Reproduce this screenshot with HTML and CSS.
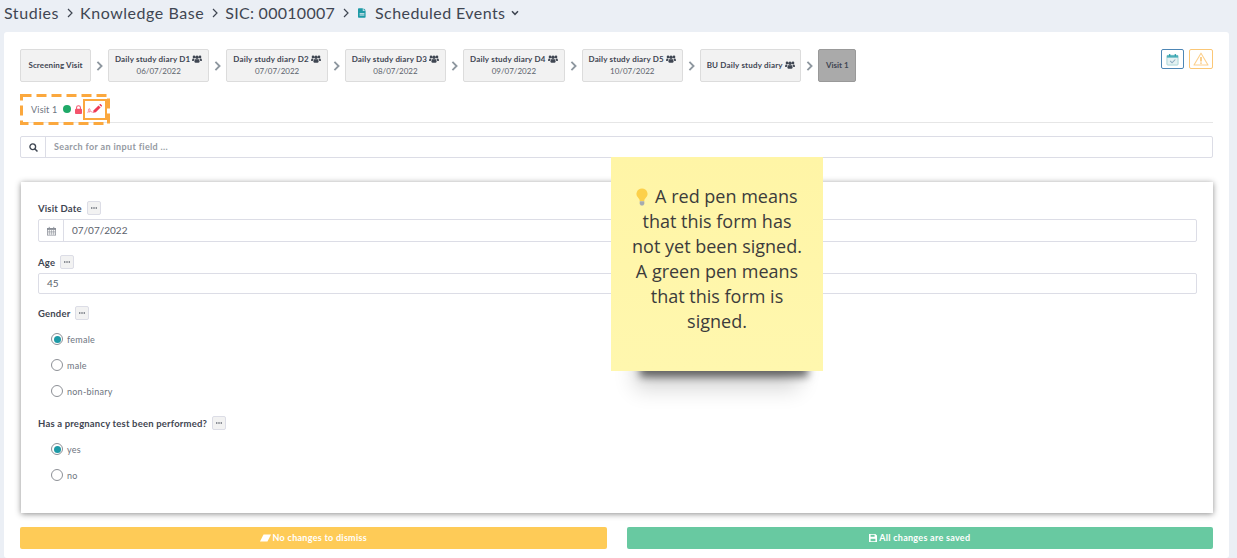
FILE: index.html
```html
<!DOCTYPE html>
<html lang="en">
<head>
<meta charset="utf-8">
<title>Scheduled Events</title>
<link rel="stylesheet" href="styles.css">
</head>
<body>
<svg class="defs" width="0" height="0" aria-hidden="true">
  <symbol id="users" viewBox="0 0 16 12">
    <circle cx="3.200" cy="2.600" r="2.100"/><circle cx="12.800" cy="2.600" r="2.100"/><circle cx="8" cy="3" r="2.800"/>
    <path d="M0 8.500C0 6 1 5 2.200 5c.9 0 1.500.4 2 .9-.9.7-1.300 1.900-1.400 3.400H.8C.3 9.300 0 8.900 0 8.500zM16 8.500C16 6 15 5 13.800 5c-.9 0-1.500.4-2 .9.9.7 1.300 1.900 1.400 3.400h2c.5 0 .8-.4.8-.8zM3.800 10c0-2.900 1.200-4.200 2.600-4.200.5.300 1 .5 1.600.5s1.100-.2 1.600-.5c1.400 0 2.600 1.300 2.600 4.200 0 1-.7 1.800-1.500 1.800H5.300c-.8 0-1.500-.8-1.500-1.800z"/>
  </symbol>
  <symbol id="chev" viewBox="0 0 8 12">
    <path d="M1.500 1 6.500 6l-5 5" fill="none" stroke="currentColor" stroke-width="2.200"/>
  </symbol>
  <symbol id="dots" viewBox="0 0 8 2">
    <circle cx="1" cy="1" r="1"/><circle cx="4" cy="1" r="1"/><circle cx="7" cy="1" r="1"/>
  </symbol>
</svg>

<header class="crumbs">
  <span>Studies</span><svg class="sep" viewBox="0 0 6 10"><path d="M1 1l4 4-4 4" fill="none" stroke="currentColor" stroke-width="1.200"/></svg>
  <span>Knowledge Base</span><svg class="sep" viewBox="0 0 6 10"><path d="M1 1l4 4-4 4" fill="none" stroke="currentColor" stroke-width="1.200"/></svg>
  <span class="sic">SIC: 00010007</span><svg class="sep" viewBox="0 0 6 10"><path d="M1 1l4 4-4 4" fill="none" stroke="currentColor" stroke-width="1.200"/></svg>
  <svg class="doc-icon" viewBox="0 0 10 12"><path d="M1 0h5v3.500h3.500V11a1 1 0 0 1-1 1H1a1 1 0 0 1-1-1V1a1 1 0 0 1 1-1zM7 0l3 3H7zM2 6h6v1H2zM2 8h6v1H2z" fill-rule="evenodd"/></svg>
  <span class="current">Scheduled Events</span>
  <svg class="caret" viewBox="0 0 8 6"><path d="M1 1.200 4 4.300l3-3.100" fill="none" stroke="currentColor" stroke-width="1.500"/></svg>
</header>

<main class="card">
  <div class="timeline-row">
    <nav class="timeline">
      <div class="node node-s">Screening Visit</div>
      <svg class="chev"><use href="#chev"/></svg>
      <div class="node"><b>Daily study diary D1 <svg class="users"><use href="#users"/></svg></b><span>06/07/2022</span></div>
      <svg class="chev"><use href="#chev"/></svg>
      <div class="node"><b>Daily study diary D2 <svg class="users"><use href="#users"/></svg></b><span>07/07/2022</span></div>
      <svg class="chev"><use href="#chev"/></svg>
      <div class="node"><b>Daily study diary D3 <svg class="users"><use href="#users"/></svg></b><span>08/07/2022</span></div>
      <svg class="chev"><use href="#chev"/></svg>
      <div class="node"><b>Daily study diary D4 <svg class="users"><use href="#users"/></svg></b><span>09/07/2022</span></div>
      <svg class="chev"><use href="#chev"/></svg>
      <div class="node"><b>Daily study diary D5 <svg class="users"><use href="#users"/></svg></b><span>10/07/2022</span></div>
      <svg class="chev"><use href="#chev"/></svg>
      <div class="node"><b>BU Daily study diary <svg class="users"><use href="#users"/></svg></b></div>
      <svg class="chev"><use href="#chev"/></svg>
      <div class="node node-active">Visit 1</div>
    </nav>
    <div class="status-btns">
      <span class="sbtn sbtn-blue">
        <svg viewBox="0 0 14 14" width="13" height="13"><rect x="1" y="2.500" width="12" height="10.500" rx="1" fill="#e4f1f2" stroke="#a5d3d6"/><rect x="1" y="2.500" width="12" height="2.500" fill="#4fb0ba"/><path d="M4 1v2.500M10 1v2.500" stroke="#1e9aa6" stroke-width="1.200"/><path d="m4.500 8.500 2 2 3.500-3.500" fill="none" stroke="#8aa9bf" stroke-width="1.100"/></svg>
      </span>
      <span class="sbtn sbtn-yellow">
        <svg viewBox="0 0 16 14" width="16" height="14"><path d="M8 1.200 15 13H1z" fill="none" stroke="#fcd08d" stroke-width="1.100" stroke-linejoin="round"/><path d="M8 5v4.500M8 10.500v1.200" stroke="#f9b44f" stroke-width="1.300"/></svg>
      </span>
    </div>
  </div>

  <div class="tabs">
    <div class="tab">
      <span class="tab-label">Visit 1</span>
      <i class="dot"></i>
      <svg class="lock" viewBox="0 0 8 10"><path d="M1.800 4.500V2.800a2.200 2.200 0 0 1 4.400 0v1.700" fill="none" stroke="#f4546c" stroke-width="1.200"/><rect y="4" width="8" height="6" rx="1" fill="#f4546c"/></svg>
      <svg class="sign" viewBox="0 0 15 10"><path d="M.5 8.500c1.500 0 .5-4 1.700-4s.9 3.200 0 3.700c-.9.400.9-1.300 1.800-.9s.4 1.300 1.700.9" fill="none" stroke="#f58a9a" stroke-width="1"/><path d="M6 8.800l.7-2.600L11.500 1.400l2.100 2.100-4.800 4.800z" fill="#ee3a55"/><path d="M12.200.7l.6-.5a.7.7 0 0 1 1 0l1 1a.7.7 0 0 1 0 1l-.5.6z" fill="#ee3a55"/></svg>
    </div>
    <svg class="tab-dash" viewBox="0 0 90 31" aria-hidden="true"><rect x="1.500" y="1.500" width="87" height="28" fill="none" stroke="#fba83e" stroke-width="3" stroke-dasharray="10 5"/></svg>
    <i class="pen-box" aria-hidden="true"></i>
  </div>

  <div class="input-group search">
    <span class="addon"><svg viewBox="0 0 12 12" width="9" height="9"><circle cx="5" cy="5" r="3.800" fill="none" stroke="#3f4652" stroke-width="1.800"/><path d="m8 8 3.300 3.300" stroke="#3f4652" stroke-width="2"/></svg></span>
    <span class="field placeholder">Search for an input field ...</span>
  </div>

  <form class="form-card">
    <div class="fgroup fgroup-date">
      <div class="label-row"><label>Visit Date</label><span class="more"><svg><use href="#dots"/></svg></span></div>
      <div class="input-group tall">
        <span class="addon"><svg viewBox="0 0 12 12" width="9" height="10"><path d="M0 2h12v10H0z" fill="#8a8f98"/><path d="M1 4.500h10V11H1z" fill="#fff"/><path d="M1 6.500h10M1 8.500h10M3.300 4.500V11M6 4.500V11M8.700 4.500V11" stroke="#8a8f98" stroke-width=".7"/><path d="M3 .5v2M9 .5v2" stroke="#8a8f98" stroke-width="1.200"/></svg></span>
        <span class="field value">07/07/2022</span>
      </div>
    </div>
    <div class="fgroup fgroup-age">
      <div class="label-row"><label>Age</label><span class="more"><svg><use href="#dots"/></svg></span></div>
      <div class="input-group"><span class="field value">45</span></div>
    </div>
    <div class="fgroup fgroup-gender">
      <div class="label-row"><label>Gender</label><span class="more"><svg><use href="#dots"/></svg></span></div>
      <div class="radios">
        <div class="radio on"><i></i>female</div>
        <div class="radio"><i></i>male</div>
        <div class="radio"><i></i>non-binary</div>
      </div>
    </div>
    <div class="fgroup fgroup-preg">
      <div class="label-row"><label>Has a pregnancy test been performed?</label><span class="more"><svg><use href="#dots"/></svg></span></div>
      <div class="radios">
        <div class="radio on"><i></i>yes</div>
        <div class="radio"><i></i>no</div>
      </div>
    </div>
  </form>

  <div class="actions">
    <div class="action action-yellow">
      <svg viewBox="0 0 14 10" width="11" height="8"><path d="M4.500.5H14L9.500 9.500H0z" fill="#fff"/></svg>
      No changes to dismiss
    </div>
    <div class="action action-green">
      <svg viewBox="0 0 10 10" width="8" height="8"><path d="M0 0h8l2 2v8H0z" fill="#fff"/><path d="M2 1h5v2.500H2z" fill="#68c9a1"/><path d="M2 6h6v3H2z" fill="#68c9a1"/></svg>
      All changes are saved
    </div>
  </div>

  <aside class="sticky">
    <svg class="bulb" viewBox="0 0 12 18"><path d="M6 .5a5.500 5.500 0 0 0-3.300 9.900c.8.700 1 1.500 1 2.600h4.600c0-1.100.2-1.900 1-2.600A5.500 5.500 0 0 0 6 .5z" fill="#fcd04a"/><path d="M3.700 13.200h4.600v2.800l-1.200 1.500H4.900L3.700 16z" fill="#a6abb0"/></svg>
    A red pen means that this form has not yet been signed. A green pen means that this form is signed.
  </aside>
</main>
</body>
</html>
```

FILE: styles.css
```css
* { box-sizing: border-box; }
html, body { margin: 0; height: 558px; overflow: hidden; }
body {
  background: #ebeff5;
  font-family: "Lato", "Noto Sans", sans-serif;
  color: #3f4652;
}
.defs { position: absolute; }

.crumbs {
  height: 32px;
  padding: 0 0 7px 4px;
  display: flex;
  align-items: center;
  font-size: 16px;
  letter-spacing: .55px;
  color: #3f4652;
}
.sep { width: 6px; height: 10px; margin: 0 7px 0 8px; flex: none; }
.sic { letter-spacing: .28px; }
.current { letter-spacing: .42px; }
.doc-icon { width: 8px; height: 10px; fill: #1e9aa6; margin: 0 9px 0 2px; }
.caret { width: 8px; height: 6px; margin-left: 6px; }

.card {
  position: relative;
  margin: 0 8px 0 4px;
  height: 526px;
  background: #fff;
  border-radius: 3px;
  padding: 17px 16px 0;
}

.timeline-row { display: flex; justify-content: space-between; align-items: flex-start; height: 33px; }
.timeline { display: flex; align-items: center; }
.chev { width: 7px; height: 10px; margin: 0 5px; color: #8e979f; flex: none; }
.node {
  height: 33px;
  width: 101.4px;
  padding-bottom: 2px;
  background: #f2f2f2;
  border: 1px solid #dcdcdc;
  border-radius: 2px;
  display: flex;
  flex-direction: column;
  align-items: center;
  justify-content: center;
  font-size: 8px;
  line-height: 12px;
  white-space: nowrap;
}
.node b { font-weight: 700; letter-spacing: .18px; }
.node span { color: #5c626c; }
.node-s { width: 71px; font-weight: 700; letter-spacing: .1px; }
.node-active { width: 38px; background: #aaa; border-color: #999; font-weight: 700; }
.users { width: 10px; height: 8px; fill: #3f4652; vertical-align: -1px; }

.status-btns { display: flex; gap: 5px; }
.sbtn { width: 23px; height: 20px; border-radius: 2px; display: flex; align-items: center; justify-content: center; background: #fff; }
.sbtn-blue { border: 1px solid #4d86b5; }
.sbtn-yellow { width: 24px; border: 1px solid #fbc776; }

.tabs {
  position: relative;
  margin-top: 14px;
  height: 27px;
  border-bottom: 1px solid #e6e6e6;
}
.tab { height: 26px; display: flex; align-items: center; padding-left: 11px; font-size: 9px; }
.tab-label { color: #6d7480; letter-spacing: .2px; margin-right: 6px; }
.dot { width: 8px; height: 8px; border-radius: 50%; background: #1fa968; margin-right: 4px; }
.lock { width: 7px; height: 9px; margin-right: 5px; }
.sign { width: 15px; height: 10px; }
.tab-dash {
  position: absolute;
  left: 0; top: -2px;
  width: 90px; height: 31px;
}
.pen-box {
  position: absolute;
  left: 63px; top: 3px;
  width: 24px; height: 21px;
  border: 2.500px solid #fba83e;
}

.input-group {
  display: flex;
  height: 21px;
  border: 1px solid #dcdde6;
  border-radius: 2px;
  background: #fff;
  align-items: stretch;
}
.input-group.tall { height: 23px; }
.addon { width: 25px; flex: none; display: flex; align-items: center; justify-content: center; border-right: 1px solid #dcdde6; }
.field { flex: 1; display: flex; align-items: center; padding: 0 0 1px 8px; }
.search { margin-top: 13px; height: 22px; }
.placeholder { font-size: 9px; font-weight: 700; color: #959aa2; letter-spacing: .35px; }
.value { font-size: 10px; color: #5c626c; }

.form-card {
  width: 1192px;
  margin: 24px 0 0 1px;
  height: 331px;
  background: #fff;
  padding: 19px 16px 0 17px;
  box-shadow: 0 1px 6px rgba(0, 0, 0, .45);
  display: flex;
  flex-direction: column;
}
.label-row { display: flex; align-items: center; gap: 5px; height: 14px; }
.label-row label { font-size: 9.5px; font-weight: 700; color: #3f4652; letter-spacing: .18px; }
.more {
  width: 14px; height: 14px;
  border: 1px solid #dcdde6;
  border-radius: 2px;
  background: #f2f2f2;
  display: flex; align-items: center; justify-content: center;
}
.more svg { width: 6px; height: 2px; fill: #3f4652; }
.fgroup-date .input-group { margin-top: 4px; }
.fgroup-age { margin-top: 13px; }
.fgroup-age .input-group { margin-top: 4px; }
.fgroup-gender { margin-top: 12px; }
.fgroup-preg { margin-top: 12px; }
.radios { margin-top: 6px; padding-left: 13px; display: flex; flex-direction: column; }
.fgroup-preg .radios { margin-top: 6px; }
.radio { height: 26px; display: flex; align-items: center; gap: 4px; font-size: 9px; color: #6d7480; letter-spacing: .25px; }
.radio i {
  width: 12px; height: 12px;
  border-radius: 50%;
  border: 1px solid #8d9096;
  background: #fff;
  display: flex; align-items: center; justify-content: center;
}
.radio.on i::after { content: ""; width: 7px; height: 7px; border-radius: 50%; background: #1e9aa6; }

.actions { display: flex; gap: 20px; margin-top: 14px; }
.action {
  flex: 1;
  height: 22px;
  padding-bottom: 1px;
  border-radius: 2px;
  display: flex;
  align-items: center;
  justify-content: center;
  gap: 2px;
  font-size: 9px;
  font-weight: 700;
  letter-spacing: .28px;
  color: #fff;
}
.action-yellow { background: #fecb57; }
.action-green { background: #68c9a1; }

.sticky {
  position: absolute;
  left: 607px; top: 125px;
  width: 212px; height: 214px;
  padding: 27px 19px 0;
  background: linear-gradient(180deg, #fff5a6 0%, #fff7ae 100%);
  box-shadow: 7px 28px 8px -22px rgba(0, 0, 0, .55), 0 42px 20px -24px rgba(0, 0, 0, .16);
  font-family: "Open Sans", sans-serif;
  font-size: 18px;
  line-height: 25px;
  text-align: center;
  color: #3c3c3c;
}
.bulb { width: 12px; height: 18px; vertical-align: -3px; margin-right: 2px; }
```
